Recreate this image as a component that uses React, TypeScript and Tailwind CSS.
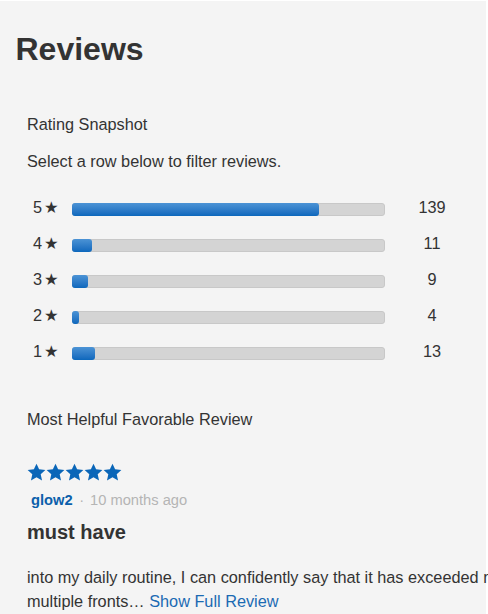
export default function App() {
  const rows = [
    { stars: 5, count: 139 },
    { stars: 4, count: 11 },
    { stars: 3, count: 9 },
    { stars: 2, count: 4 },
    { stars: 1, count: 13 },
  ];
  const total = rows.reduce((s, r) => s + r.count, 0);

  return (
    <div className="w-[488px] h-[614px] overflow-hidden bg-white font-['Liberation_Sans',Arial,sans-serif] text-[#333]">
      <div className="mt-px mr-[2px] h-full bg-[#f4f4f4] pt-[28px]">
        <h1 className="pl-[15.5px] text-[32px] leading-[40px] font-bold">Reviews</h1>

        <div className="pl-[27px] text-[16.3px]">
          <p className="mt-[43px] leading-[24px]">Rating Snapshot</p>
          <p className="mt-[13px] leading-[24px]">Select a row below to filter reviews.</p>

          <div className="mt-[16px]">
            {rows.map((r) => (
              <div key={r.stars} className="flex h-[36px] items-center leading-[24px] cursor-pointer">
                <div className="w-[45px] pl-[6px] whitespace-nowrap">
                  {r.stars}
                  <span className="ml-[2px] font-['DejaVu_Sans',sans-serif]">★</span>
                </div>
                <div className="mt-1 h-[13px] w-[313px] rounded-[3px] border border-[#c8c8c8] bg-[#d4d4d4]">
                  <div
                    className="-mt-px -ml-px h-[13px] rounded-[3px] bg-linear-to-b from-[#4b93d5] to-[#0a67bc]"
                    style={{ width: `${(r.count / total) * 313}px` }}
                  />
                </div>
                <div className="ml-[27px] w-[40px] text-center">{r.count}</div>
              </div>
            ))}
          </div>

          <p className="mt-[38px] leading-[24px]">Most Helpful Favorable Review</p>

          <div className="mt-[31.5px] flex">
            {[0, 1, 2, 3, 4].map((i) => (
              <StarIcon key={i} className="h-[19px] w-[19px] text-[#0a66b8]" />
            ))}
          </div>

          <div className="mt-[8px] flex items-baseline pl-[4px] text-[14.7px] leading-[20px]">
            <span className="font-bold text-[#0b5fab]">glow2</span>
            <span className="ml-[6.5px] mr-[6px] text-[#b5b5b5]">·</span>
            <span className="text-[#b5b5b5]">10 months ago</span>
          </div>

          <h3 className="mt-[8.6px] text-[20px] leading-[28px] font-bold">must have</h3>

          <p className="mt-[18.6px] whitespace-nowrap leading-[24px]">
            into my daily routine, I can confidently say that it has exceeded my expectations on
            <br />
            multiple fronts… <a className="text-[#1b6ab3]">Show Full Review</a>
          </p>
        </div>
      </div>
    </div>
  );
}

function StarIcon(props: { className?: string }) {
  return (
    <svg {...props} viewBox="0 0 24 24" fill="currentColor">
      <path d="M12 0.8l3.3 7.2 7.9.8-5.9 5.4 1.7 7.8L12 18l-7 4 1.7-7.8L0.8 8.8l7.9-.8z" />
    </svg>
  );
}
